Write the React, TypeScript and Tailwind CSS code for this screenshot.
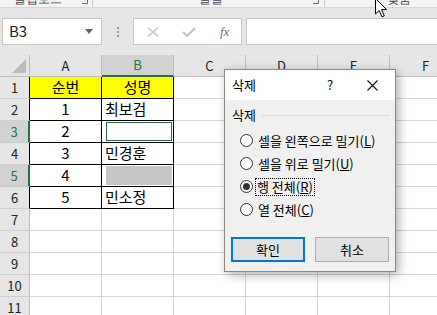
import React from "react";

const KR = "font-['Noto_Sans_CJK_KR','Noto_Sans',sans-serif]";
const cols = ["A", "B", "C", "D", "E", "F"];
const rows = [1, 2, 3, 4, 5, 6, 7, 8, 9, 10, 11, 12];
const data: Record<number, [string, string]> = {
  1: ["순번", "성명"],
  2: ["1", "최보검"],
  3: ["2", ""],
  4: ["3", "민경훈"],
  5: ["4", ""],
  6: ["5", "민소정"],
};

function Ribbon() {
  return (
    <div className="h-[8px] bg-[#f3f3f3] border-b border-[#d6d6d6] flex overflow-hidden text-[12px] text-[#444] leading-[12px]">
      <div className="w-[14px]" />
      <div className="-mt-[7px] w-[68px]">클립보드</div>
      <div className="w-[6px] h-[4px] border-r border-b border-[#777]" />
      <div className="w-[4px]" />
      <div className="h-full w-[1px] bg-[#c8c8c8]" />
      <div className="w-[106px]" />
      <div className="-mt-[7px] w-[114px]">글꼴</div>
      <div className="w-[6px] h-[4px] border-r border-b border-[#777]" />
      <div className="w-[5px]" />
      <div className="h-full w-[1px] bg-[#c8c8c8]" />
      <div className="w-[62px]" />
      <div className="-mt-[7px]">맞춤</div>
    </div>
  );
}

function FormulaBar() {
  return (
    <div className="h-[47px] bg-[#e6e6e6] flex items-center">
      <div className="ml-[2px] w-[100px] h-[27px] bg-white border border-[#c6c6c6] flex items-center pl-[6px] pr-[8px]">
        <span className={`${KR} text-[15px] text-[#222] flex-1`}>B3</span>
        <svg width="8" height="5" viewBox="0 0 8 5">
          <path d="M0 0 L8 0 L4 5 Z" fill="#666" />
        </svg>
      </div>
      <div className="w-[31px] flex flex-col items-center gap-[2px]">
        <div className="w-[2px] h-[2px] bg-[#9a9a9a]" />
        <div className="w-[2px] h-[2px] bg-[#9a9a9a]" />
        <div className="w-[2px] h-[2px] bg-[#9a9a9a]" />
      </div>
      <div className="w-[109px] h-[27px] bg-white border border-[#c6c6c6] flex items-center">
        <div className="w-[13px]" />
        <svg width="12" height="10" viewBox="0 0 12 10">
          <path d="M1 0.5 L11 9.5 M11 0.5 L1 9.5" stroke="#c4c4c4" strokeWidth="1.4" />
        </svg>
        <div className="w-[23px]" />
        <svg width="14" height="10" viewBox="0 0 14 10">
          <path d="M1 5 L5 9 L13 1" stroke="#c4c4c4" strokeWidth="2" fill="none" />
        </svg>
        <div className="w-[24px]" />
        <span className="font-['Liberation_Serif',serif] italic text-[13px] text-[#707070]">fx</span>
      </div>
      <div className="w-[4px]" />
      <div className="flex-1 h-[27px] bg-white border border-r-0 border-[#c6c6c6]" />
    </div>
  );
}

function HeaderRow() {
  return (
    <div className="flex h-[22px]">
      <div className="w-[30px] shrink-0 bg-[#e6e6e6] border-r border-b border-[#bcbcbc] flex items-end justify-end pr-[3px] pb-[3px]">
        <svg width="14" height="14" viewBox="0 0 14 14">
          <path d="M14 0 L14 14 L0 14 Z" fill="#bcbcbc" />
        </svg>
      </div>
      {cols.map((c) =>
        c === "B" ? (
          <div
            key={c}
            className={`${KR} w-[72px] shrink-0 bg-[#d2d2d2] border-r border-b-2 border-r-[#bcbcbc] border-b-[#217346] flex items-center justify-center text-[13px] text-[#217346]`}
          >
            {c}
          </div>
        ) : (
          <div
            key={c}
            className={`${KR} w-[72px] shrink-0 bg-[#e6e6e6] border-r border-b border-[#bcbcbc] flex items-center justify-center text-[13px] text-[#222]`}
          >
            {c}
          </div>
        )
      )}
    </div>
  );
}

function RowHead({ r }: { r: number }) {
  const sel = r === 3 || r === 5;
  if (sel) {
    return (
      <div className={`${KR} w-[30px] shrink-0 bg-[#d2d2d2] border-r-2 border-b border-r-[#217346] border-b-[#c8c8c8] flex items-center justify-center text-[13px] text-[#217346]`}>
        {r}
      </div>
    );
  }
  if (r <= 6) {
    return (
      <div className={`${KR} w-[30px] shrink-0 bg-[#e6e6e6] border-r border-b border-r-black border-b-[#d0d0d0] flex items-center justify-center text-[13px] text-[#222]`}>
        {r}
      </div>
    );
  }
  return (
    <div className={`${KR} w-[30px] shrink-0 bg-[#e6e6e6] border-r border-b border-r-[#bcbcbc] border-b-[#d0d0d0] flex items-center justify-center text-[13px] text-[#222]`}>
      {r}
    </div>
  );
}

function Cell({ r, i }: { r: number; i: number }) {
  const inTable = r <= 6 && i <= 1;
  if (!inTable) {
    return <div className="w-[72px] shrink-0 border-r border-b border-[#d4d4d4]" />;
  }
  const text = data[r][i];
  const bg = r === 1 ? "bg-[#ffff00]" : "bg-white";
  const align = i === 0 || r === 1 ? "justify-center" : "justify-start pl-[3px]";
  return (
    <div className={`${KR} ${bg} ${align} w-[72px] shrink-0 border-r border-b border-black flex items-center text-[15px] text-black`}>
      {r === 3 && i === 1 ? <div className="flex-1 self-stretch m-[1px] border border-[#2a6a47]" /> : null}
      {r === 5 && i === 1 ? <div className="flex-1 self-stretch m-[1px] bg-[#c6c6c6]" /> : null}
      {text}
    </div>
  );
}

function Radio({ checked, focus, children }: { checked?: boolean; focus?: boolean; children: React.ReactNode }) {
  return (
    <div className="h-[23px] flex items-center pl-[15px]">
      <div className="w-[13px] h-[13px] rounded-full border border-[#333] bg-white flex items-center justify-center">
        {checked ? <div className="w-[7px] h-[7px] rounded-full bg-[#333]" /> : null}
      </div>
      <span
        className={
          focus
            ? "ml-[2px] px-[1px] h-[18px] flex items-center border border-dotted border-black"
            : "ml-[3px] px-[1px] h-[18px] flex items-center border border-transparent"
        }
      >
        {children}
      </span>
    </div>
  );
}

function Dialog() {
  return (
    <div className={`${KR} absolute left-[224px] top-[69px] w-[172px] h-[203px] border border-[#888] bg-[#f0f0f0] shadow-[3px_3px_10px_rgba(0,0,0,0.3)] flex flex-col text-[13px] text-black`}>
      <div className="h-[30px] bg-white flex items-center">
        <span className="ml-[7px]">삭제</span>
        <div className="flex-1" />
        <div className="w-[30px] text-center">?</div>
        <div className="w-[12px]" />
        <div className="w-[30px] flex justify-center">
          <svg width="11" height="11" viewBox="0 0 11 11">
            <path d="M0.5 0.5 L10.5 10.5 M10.5 0.5 L0.5 10.5" stroke="#111" strokeWidth="1.1" />
          </svg>
        </div>
        <div className="w-[8px]" />
      </div>
      <div className="flex flex-col pt-[7px]">
        <div className="h-[16px] flex items-center pl-[7px] pr-[5px]">
          <span>삭제</span>
          <div className="flex-1 h-[1px] bg-[#dcdcdc] ml-[6px]" />
        </div>
        <div className="h-[6px]" />
        <Radio>
          셀을 왼쪽으로 밀기(<u>L</u>)
        </Radio>
        <Radio>
          셀을 위로 밀기(<u>U</u>)
        </Radio>
        <Radio checked focus>
          행 전체(<u>R</u>)
        </Radio>
        <Radio>
          열 전체(<u>C</u>)
        </Radio>
        <div className="flex gap-[10px] pl-[6px] mt-[16px]">
          <div className="w-[74px] h-[25px] bg-[#e1e1e1] border-2 border-[#0078d7] flex items-center justify-center">확인</div>
          <div className="w-[74px] h-[25px] bg-[#e1e1e1] border border-[#adadad] flex items-center justify-center">취소</div>
        </div>
      </div>
    </div>
  );
}

export default function App() {
  return (
    <div className="w-[437px] h-[315px] overflow-hidden relative bg-white">
      <Ribbon />
      <FormulaBar />
      <HeaderRow />
      {rows.map((r) => (
        <div key={r} className="flex h-[22px]">
          <RowHead r={r} />
          {cols.map((c, i) => (
            <Cell key={c} r={r} i={i} />
          ))}
        </div>
      ))}
      <Dialog />
      <svg className="absolute left-[375px] top-[-2px]" width="13" height="20" viewBox="0 0 13 20">
        <path d="M0.5 0.5 L0.5 16 L4.2 12.5 L7 18.8 L9.3 17.8 L6.6 11.6 L11.6 11.6 Z" fill="white" stroke="black" strokeWidth="1" strokeLinejoin="round" />
      </svg>
    </div>
  );
}
